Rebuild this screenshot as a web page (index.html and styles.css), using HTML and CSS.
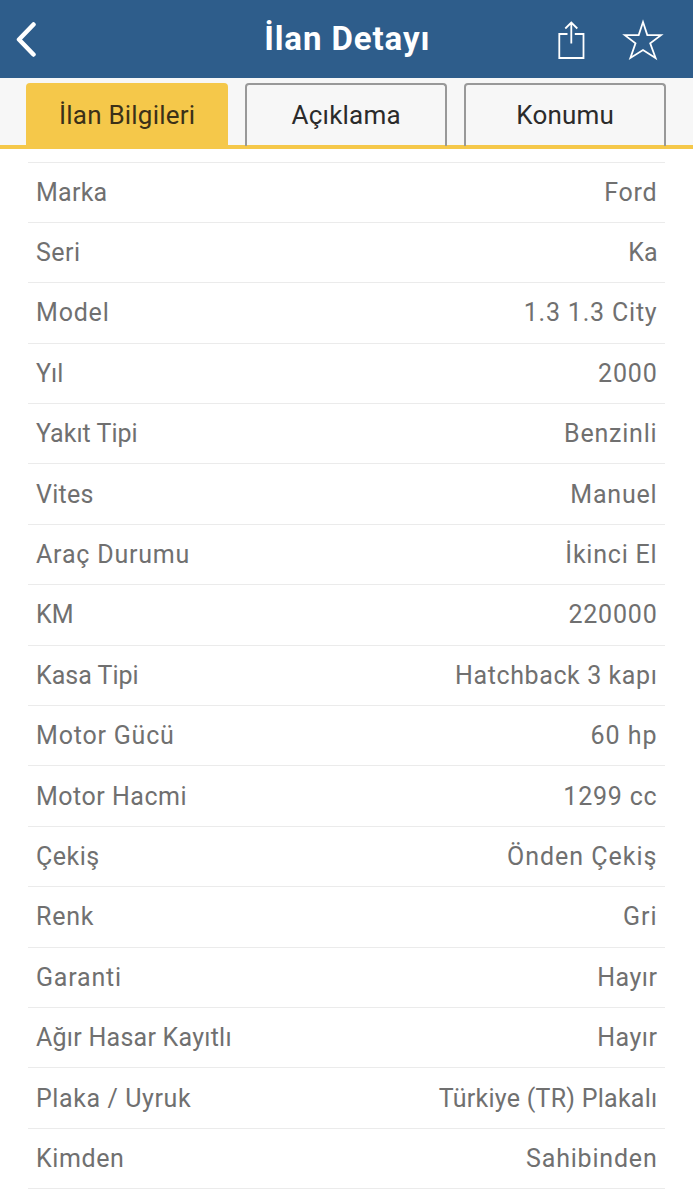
FILE: index.html
```html
<!DOCTYPE html>
<html lang="tr">
<head>
<meta charset="utf-8">
<title>İlan Detayı</title>
<link rel="stylesheet" href="styles.css">
</head>
<body>
<header class="topbar">
  <svg class="icon-back" viewBox="0 0 22 36" aria-label="Geri"><path d="M18.500 3.500 4 18.500 18.500 33.500" /></svg>
  <h1 class="title">İlan Detayı</h1>
  <div class="actions">
    <svg class="icon-share" viewBox="0 0 28 40"><path d="M10.500 14H2.300v24H26.500V14H17.800M14.300 23.500V2.500M8.300 8.500l6-6 6 6" /></svg>
    <svg class="icon-star" viewBox="0 0 42 42"><path d="M21 3 25.300 16 39 16.200 28.200 24.300 33.600 39 21 31.100 8.400 39 13.500 24.300 2.800 16.200 16.700 16Z" /></svg>
  </div>
</header>
<nav class="tabs">
  <a class="tab active">İlan Bilgileri</a>
  <a class="tab">Açıklama</a>
  <a class="tab">Konumu</a>
</nav>
<dl class="details">
  <div class="row"><dt class="tight">Marka</dt><dd>Ford</dd></div>
  <div class="row"><dt class="snug">Seri</dt><dd class="tighter">Ka</dd></div>
  <div class="row"><dt>Model</dt><dd>1.3 1.3 City</dd></div>
  <div class="row"><dt class="tighter">Yıl</dt><dd>2000</dd></div>
  <div class="row"><dt class="tighter">Yakıt Tipi</dt><dd>Benzinli</dd></div>
  <div class="row"><dt class="tight">Vites</dt><dd>Manuel</dd></div>
  <div class="row"><dt>Araç Durumu</dt><dd>İkinci El</dd></div>
  <div class="row"><dt class="tighter">KM</dt><dd>220000</dd></div>
  <div class="row"><dt class="tighter">Kasa Tipi</dt><dd class="medium">Hatchback 3 kapı</dd></div>
  <div class="row"><dt>Motor Gücü</dt><dd class="loose">60 hp</dd></div>
  <div class="row"><dt class="snug">Motor Hacmi</dt><dd>1299 cc</dd></div>
  <div class="row"><dt class="snug">Çekiş</dt><dd class="loose">Önden Çekiş</dd></div>
  <div class="row"><dt>Renk</dt><dd class="loose">Gri</dd></div>
  <div class="row"><dt>Garanti</dt><dd class="snug">Hayır</dd></div>
  <div class="row"><dt class="tight">Ağır Hasar Kayıtlı</dt><dd class="snug">Hayır</dd></div>
  <div class="row"><dt class="medium">Plaka / Uyruk</dt><dd class="tight">Türkiye (TR) Plakalı</dd></div>
  <div class="row"><dt class="medium">Kimden</dt><dd>Sahibinden</dd></div>
</dl>
</body>
</html>
```
FILE: styles.css
```css
* { box-sizing: border-box; }
body {
  margin: 0;
  height: 1200px;
  overflow: hidden;
  background: #fff;
  font-family: Roboto, "Noto Sans", sans-serif;
}
svg { display: block; fill: none; stroke: #fff; }
.topbar {
  display: grid;
  grid-template-columns: 1fr auto 1fr;
  align-items: center;
  height: 78px;
  padding: 0 29.500px 0 15px;
  background: #2e5d8b;
  color: #fff;
}
.icon-back { width: 22px; height: 36px; stroke-width: 4.5; stroke-linecap: round; stroke-linejoin: round; }
.title { margin: 0 -8px 0 8px; font-size: 33px; line-height: 40px; font-weight: 700; letter-spacing: 0.9px; }
.actions { display: flex; justify-content: flex-end; align-items: center; gap: 37px; }
.icon-share { width: 28px; height: 40px; margin-top: 1px; stroke-width: 1.8; }
.icon-star { width: 42px; height: 42px; margin-top: 2px; stroke-width: 1.8; }
.tabs {
  display: grid;
  grid-template-columns: repeat(3, 201.500px);
  gap: 17.500px;
  height: 71px;
  padding: 5px 0 0 26.400px;
  background: #f7f7f7;
  border-bottom: 4px solid #f5c84a;
}
.tab {
  border: 2px solid #999;
  border-bottom: 0;
  border-radius: 4px 4px 0 0;
  color: #2b2b2b;
  font-size: 26px;
  line-height: 61px;
  letter-spacing: 0.2px;
  text-align: center;
}
.tab.active { background: #f5c84a; border-color: #f5c84a; color: #3b3018; }
.details {
  margin: 12.500px 28px 0;
  border-top: 1px solid #ebebeb;
  color: #707070;
  font-size: 25px;
  letter-spacing: 0.8px;
}
.row {
  display: flex;
  justify-content: space-between;
  align-items: center;
  height: 60.400px;
  padding: 1px 8px 0;
  border-bottom: 1px solid #ebebeb;
}
dt, dd { margin: 0; line-height: 30px; }
dd { margin-right: -0.5px; }
.loose { letter-spacing: 1px; }
.medium { letter-spacing: 0.6px; }
.snug { letter-spacing: 0.5px; }
.tight { letter-spacing: 0.25px; }
.tighter { letter-spacing: 0; }
```
